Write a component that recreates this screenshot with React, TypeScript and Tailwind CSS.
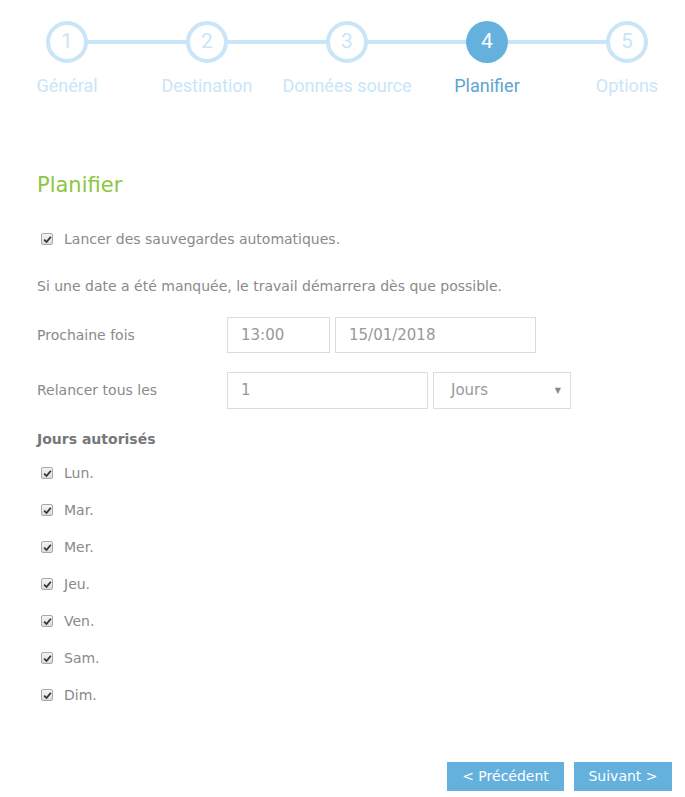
import React from "react";

const steps = ["Général", "Destination", "Données source", "Planifier", "Options"];
const days = ["Lun.", "Mar.", "Mer.", "Jeu.", "Ven.", "Sam.", "Dim."];

function Box() {
  return (
    <span className="inline-flex h-[12px] w-[12px] shrink-0 items-center justify-center rounded-[2px] border border-[#a9a9a9] bg-gradient-to-b from-[#f4f4f4] to-[#dcdcdc]">
      <svg viewBox="0 0 10 10" className="h-[9px] w-[9px]">
        <path d="M1.3 5.2 L3.9 7.8 L8.7 1.9" fill="none" stroke="#333" strokeWidth="2" />
      </svg>
    </span>
  );
}

function Stepper() {
  return (
    <div className="-ml-[3px] flex pt-[21px]" style={{ fontFamily: "Roboto, sans-serif" }}>
      {steps.map((s, i) => {
        const active = i === 3;
        return (
          <div key={s} className="relative flex w-[140px] shrink-0 flex-col items-center">
            {i < steps.length - 1 && (
              <div className="absolute left-[70px] top-[19px] h-[4px] w-[140px] bg-[#c9e5f7]" />
            )}
            <div
              className={
                active
                  ? "relative z-10 flex h-[42px] w-[42px] items-center justify-center rounded-full bg-[#64b1dd] text-[21px] text-white"
                  : "relative z-10 flex h-[42px] w-[42px] items-center justify-center rounded-full border-[4px] border-[#c9e5f7] bg-white text-[21px] text-[#c9e5f7]"
              }
            >
              {i + 1}
            </div>
            <div className={active ? "mt-[9px] whitespace-nowrap text-[18px] text-[#5ea3d2]" : "mt-[9px] whitespace-nowrap text-[18px] text-[#c9e5f7]"}>
              {s}
            </div>
          </div>
        );
      })}
    </div>
  );
}

export default function App() {
  return (
    <div className="h-[797px] w-[685px] overflow-hidden bg-white text-[14px] text-[#8a8a8a]" style={{ fontFamily: "'DejaVu Sans', Verdana, sans-serif" }}>
      <Stepper />
      <div className="pl-[37px] pr-[13px]">
        <h1 className="mt-[72px] text-[21px] leading-[28px] text-[#8dc63f]">Planifier</h1>
        <label className="mt-[30px] ml-[4px] flex items-center gap-[11px] leading-[20px]">
          <Box />
          <span>Lancer des sauvegardes automatiques.</span>
        </label>
        <p className="mt-[27px] leading-[20px]">Si une date a été manquée, le travail démarrera dès que possible.</p>
        <div className="mt-[21px] flex items-center">
          <span className="w-[190px]">Prochaine fois</span>
          <div className="flex h-[36px] w-[103px] items-center border border-[#dcdcdc] px-[13px] text-[15px] text-[#999]">13:00</div>
          <div className="ml-[5px] flex h-[36px] w-[201px] items-center border border-[#dcdcdc] px-[13px] text-[15px] text-[#999]">15/01/2018</div>
        </div>
        <div className="mt-[19px] flex items-center">
          <span className="w-[190px]">Relancer tous les</span>
          <div className="flex h-[37px] w-[201px] items-center border border-[#dcdcdc] px-[13px] text-[15px] text-[#999]">1</div>
          <div className="ml-[5px] flex h-[37px] w-[138px] items-center justify-between border border-[#dcdcdc] pl-[17px] pr-[9px] text-[15px] text-[#999]">
            <span>Jours</span>
            <span className="text-[8px] text-[#888]">▼</span>
          </div>
        </div>
        <div className="mt-[20px] font-bold leading-[20px] text-[#777]">Jours autorisés</div>
        <div className="mt-[14px] flex flex-col gap-[17px]">
          {days.map((d) => (
            <label key={d} className="ml-[4px] flex items-center gap-[11px] leading-[20px]">
              <Box />
              <span>{d}</span>
            </label>
          ))}
        </div>
        <div className="mt-[57px] flex justify-end gap-[10px]">
          <button className="h-[29px] w-[117px] bg-[#64b1dd] text-[14px] text-white">&lt; Précédent</button>
          <button className="h-[29px] w-[98px] bg-[#64b1dd] text-[14px] text-white">Suivant &gt;</button>
        </div>
      </div>
    </div>
  );
}
